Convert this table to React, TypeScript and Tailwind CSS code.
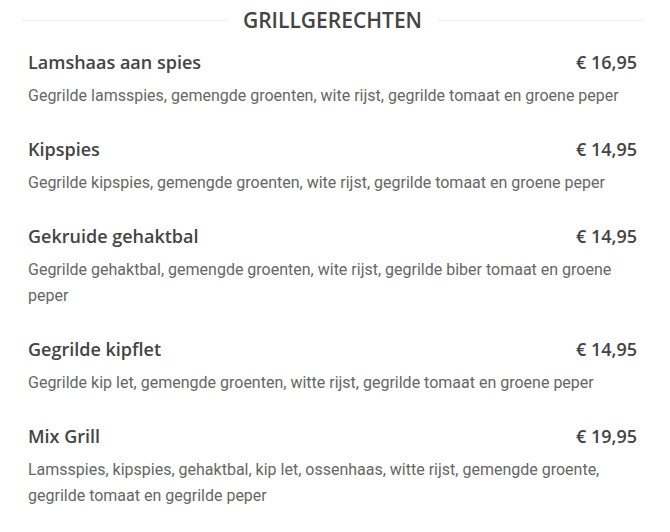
const items = [
  {
    name: "Lamshaas aan spies",
    price: "€ 16,95",
    desc: "Gegrilde lamsspies, gemengde groenten, wite rijst, gegrilde tomaat en groene peper",
  },
  {
    name: "Kipspies",
    price: "€ 14,95",
    desc: "Gegrilde kipspies, gemengde groenten, wite rijst, gegrilde tomaat en groene peper",
  },
  {
    name: "Gekruide gehaktbal",
    price: "€ 14,95",
    desc: "Gegrilde gehaktbal, gemengde groenten, wite rijst, gegrilde biber tomaat en groene peper",
  },
  {
    name: "Gegrilde kipflet",
    price: "€ 14,95",
    desc: "Gegrilde kip let, gemengde groenten, witte rijst, gegrilde tomaat en groene peper",
  },
  {
    name: "Mix Grill",
    price: "€ 19,95",
    desc: "Lamsspies, kipspies, gehaktbal, kip let, ossenhaas, witte rijst, gemengde groente, gegrilde tomaat en gegrilde peper",
  },
];

const App = () => {
  return (
    <div className="w-[670px] bg-white pl-[22px] pr-[27px] pt-[5px]">
      <div className="flex items-center gap-4">
        <div className="h-px flex-1 bg-[#ebebeb]" />
        <h2 className="font-['Open_Sans',sans-serif] text-[21px] font-semibold leading-[30px] text-[#444]">
          GRILLGERECHTEN
        </h2>
        <div className="h-px flex-1 bg-[#ebebeb]" />
      </div>

      <div className="px-[6px] pt-[12px]">
        {items.map((item) => (
          <div key={item.name} className="pb-[25px]">
            <div className="flex items-center justify-between">
              <h3 className="font-['Open_Sans',sans-serif] text-[18px] font-semibold leading-[30px] text-[#444]">
                {item.name}
              </h3>
              <span className="font-['Open_Sans',sans-serif] text-[18px] font-semibold leading-[30px] text-[#444]">
                {item.price}
              </span>
            </div>
            <p className="mt-[6px] font-['Roboto',sans-serif] text-[16px] leading-[26px] text-[#666]">
              {item.desc}
            </p>
          </div>
        ))}
      </div>
    </div>
  );
};

export default App;
